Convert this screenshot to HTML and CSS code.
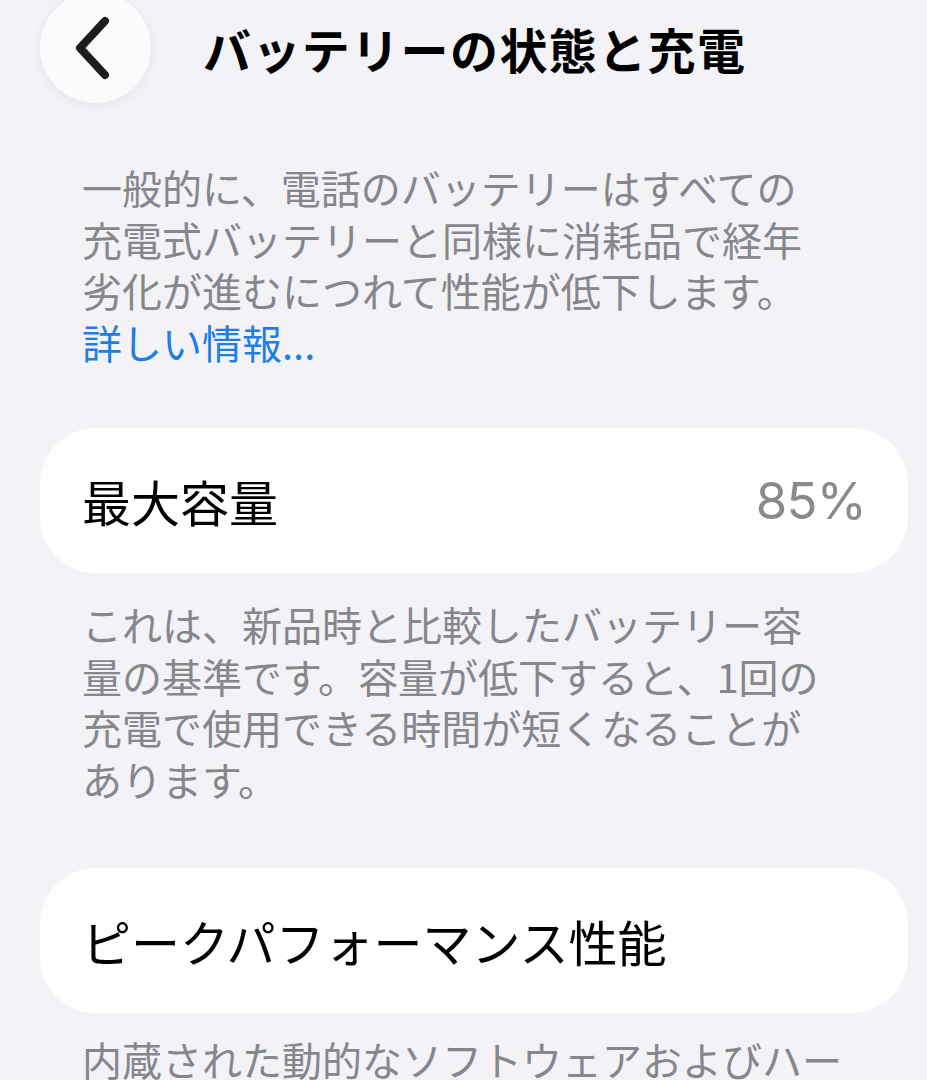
FILE: index.html
```html
<!DOCTYPE html>
<html lang="ja">
<head>
<meta charset="utf-8">
<title>バッテリーの状態と充電</title>
<link rel="stylesheet" href="styles.css">
</head>
<body>
<div class="screen">
  <header class="nav">
    <button class="back" aria-label="戻る">
      <svg viewBox="0 0 40 64" width="40" height="64">
        <path d="M33 5 L8 32 L33 59" fill="none" stroke="#1c1c1e" stroke-width="8" stroke-linecap="round" stroke-linejoin="round"/>
      </svg>
    </button>
    <h1 class="title">バッテリーの状態と充電</h1>
  </header>

  <p class="footnote intro">一般的に、電話のバッテリーはすべての<br>充電式バッテリーと同様に消耗品で経年<br>劣化が進むにつれて性能が低下します。<br><a class="link" href="#">詳しい情報...</a></p>

  <div class="card">
    <span class="label">最大容量</span>
    <span class="value">85%</span>
  </div>
  <p class="footnote after">これは、新品時と比較したバッテリー容<br>量の基準です。容量が低下すると、1回の<br>充電で使用できる時間が短くなることが<br>あります。</p>

  <div class="card">
    <span class="label">ピークパフォーマンス性能</span>
  </div>
  <p class="footnote after last">内蔵された動的なソフトウェアおよびハー</p>
</div>
</body>
</html>
```

FILE: styles.css
```css
html, body {
  margin: 0;
  padding: 0;
  background: #f2f2f7;
}

body {
  font-family: "Noto Sans CJK JP", "Noto Sans", sans-serif;
  color: #000;
  overflow: hidden;
}

.screen {
  padding: 0 19px 0 40px;
  height: 1080px;
  overflow: hidden;
}

.nav {
  display: flex;
  align-items: center;
  gap: 52px;
  margin-top: -8px;
  height: 111px;
}

.back {
  flex: none;
  width: 111px;
  height: 111px;
  border-radius: 50%;
  border: none;
  background: #fbfbfd;
  box-shadow: 0 2px 14px rgba(0, 0, 0, 0.06);
  display: flex;
  align-items: center;
  justify-content: center;
  padding: 0 8px 0 0;
}

.title {
  margin: 0;
  font-size: 48px;
  font-weight: 700;
  letter-spacing: 1.4px;
  color: #000;
  line-height: 1;
}

.footnote {
  margin: 0;
  padding: 0 0 0 42px;
  font-size: 40px;
  line-height: 51.5px;
  color: #86868b;
  white-space: nowrap;
}

.intro {
  margin-top: 59px;
}

.link {
  color: #1f7de4;
  text-decoration: none;
}

.card {
  display: flex;
  align-items: center;
  justify-content: space-between;
  height: 145px;
  padding: 0 42px 0 42px;
  background: #fff;
  border-radius: 56px;
}

.footnote.after {
  margin-top: 26px;
}

.footnote.last {
  margin-top: 21px;
}

.intro + .card {
  margin-top: 60px;
}

.after + .card {
  margin-top: 63px;
}

.label {
  font-size: 49px;
  line-height: 1;
  color: #000;
}

.value {
  font-family: "Inter", "Liberation Sans", sans-serif;
  font-size: 51px;
  line-height: 1;
  color: #8a8a8e;
  letter-spacing: -0.8px;
}
```
